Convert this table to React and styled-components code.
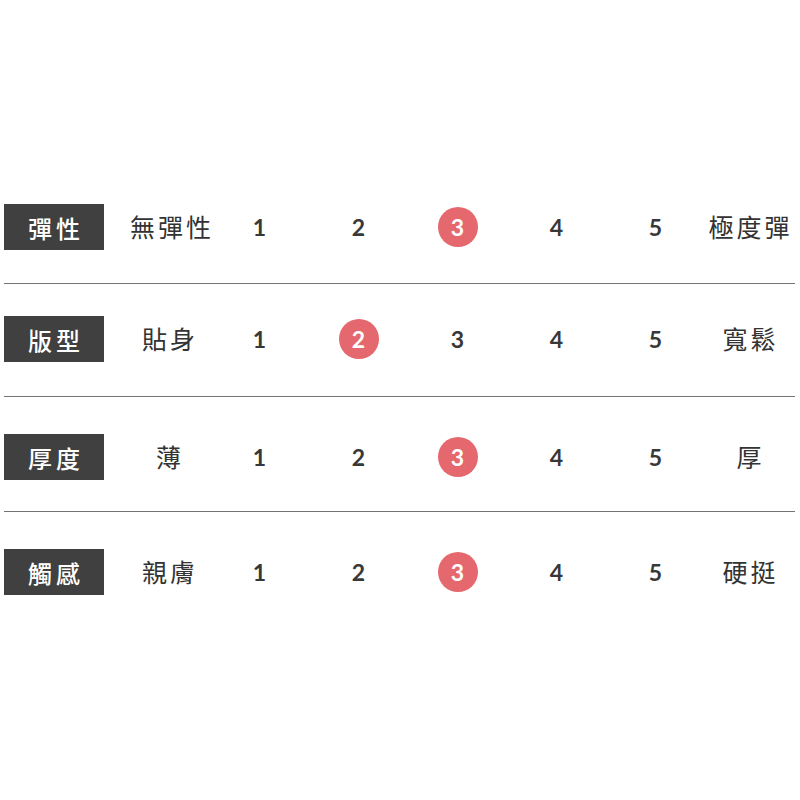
import React from "react";
import styled, { createGlobalStyle } from "styled-components";

const Global = createGlobalStyle`
  html, body { margin: 0; padding: 0; background: #fff; }
  body { font-family: "Noto Sans CJK TC", "Noto Sans", sans-serif; }
`;

const Table = styled.div`
  width: 791px;
  margin: 170px 0 0 4px;
`;

const Row = styled.div`
  display: grid;
  grid-template-columns: 100px 106px repeat(5, 99px) 88px;
  align-items: center;
  height: 46px;
  padding-top: ${(p) => p.$pt}px;
  padding-bottom: ${(p) => p.$pb}px;
  border-bottom: ${(p) => (p.$last ? "none" : "1px solid #737373")};
`;

const Label = styled.div`
  height: 46px;
  background: #404040;
  color: #fff;
  display: flex;
  align-items: center;
  justify-content: center;
  font-family: "Noto Sans CJK TC", sans-serif;
  font-size: 24px;
  font-weight: 500;
  letter-spacing: 4px;
  padding-left: 4px;
  box-sizing: border-box;
`;

const Side = styled.div`
  font-family: "Noto Sans CJK TC", sans-serif;
  font-size: 25px;
  color: #333;
  letter-spacing: 3px;
  text-align: center;
  padding-left: ${(p) => (p.$left ? 26 : 3)}px;
  margin-top: -2px;
  white-space: nowrap;
`;

const Cell = styled.div`
  display: flex;
  justify-content: center;
  align-items: center;
`;

const Num = styled.span`
  display: flex;
  align-items: center;
  justify-content: center;
  width: 40px;
  height: 40px;
  border-radius: 50%;
  background: ${(p) => (p.$on ? "#e4686d" : "transparent")};
  color: ${(p) => (p.$on ? "#fff" : "#383838")};
  font-family: "Lato", "Noto Sans", sans-serif;
  font-weight: 700;
  font-size: 23px;
`;

const rows = [
  { label: "彈性", left: "無彈性", right: "極度彈", sel: 3, pt: 34, pb: 33 },
  { label: "版型", left: "貼身", right: "寬鬆", sel: 2, pt: 32, pb: 34 },
  { label: "厚度", left: "薄", right: "厚", sel: 3, pt: 37, pb: 31 },
  { label: "觸感", left: "親膚", right: "硬挺", sel: 3, pt: 37, pb: 0, last: true },
];

export default function App() {
  return (
    <>
      <Global />
      <Table>
        {rows.map((r) => (
          <Row key={r.label} $pt={r.pt} $pb={r.pb} $last={r.last}>
            <Label>{r.label}</Label>
            <Side $left>{r.left}</Side>
            {[1, 2, 3, 4, 5].map((n) => (
              <Cell key={n}>
                <Num $on={n === r.sel}>{n}</Num>
              </Cell>
            ))}
            <Side>{r.right}</Side>
          </Row>
        ))}
      </Table>
    </>
  );
}
